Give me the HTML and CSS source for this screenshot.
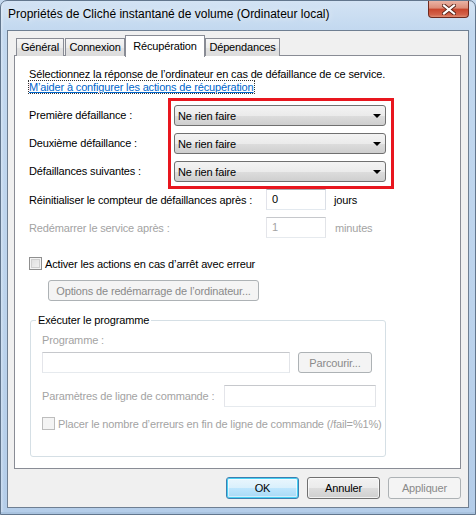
FILE: index.html
```html
<!DOCTYPE html>
<html lang="fr">
<head>
<meta charset="utf-8">
<title>Propriétés de Cliché instantané de volume</title>
<link rel="stylesheet" href="styles.css">
</head>
<body>
<div class="window">
  <div class="titlebar">
    <div class="title">Propriétés de Cliché instantané de volume (Ordinateur local)</div>
    <div class="close">
      <svg width="14" height="11" viewBox="0 0 14 11">
        <path d="M2 1.5 L12 9.5 M12 1.5 L2 9.5" stroke="#5a2418" stroke-width="4" stroke-linecap="square" fill="none"/>
        <path d="M2 1.5 L12 9.5 M12 1.5 L2 9.5" stroke="#ffffff" stroke-width="2.2" stroke-linecap="square" fill="none"/>
      </svg>
    </div>
  </div>
  <div class="client">
    <div class="tabs">
      <div class="tab tab-general">Général</div>
      <div class="tab tab-connexion">Connexion</div>
      <div class="tab tab-selected">Récupération</div>
      <div class="tab tab-dep">Dépendances</div>
    </div>
    <div class="panel">
      <p class="intro">Sélectionnez la réponse de l’ordinateur en cas de défaillance de ce service.</p>
      <p class="intro"><a class="link" href="#">M’aider à configurer les actions de récupération</a></p>

      <div class="failures">
        <div class="fail-labels">
          <div class="fail-label">Première défaillance :</div>
          <div class="fail-label">Deuxième défaillance :</div>
          <div class="fail-label">Défaillances suivantes :</div>
        </div>
        <div class="highlight">
          <div class="combo"><span>Ne rien faire</span><span class="arrow"></span></div>
          <div class="combo"><span>Ne rien faire</span><span class="arrow"></span></div>
          <div class="combo"><span>Ne rien faire</span><span class="arrow"></span></div>
        </div>
      </div>

      <div class="field-row">
        <div class="field-label">Réinitialiser le compteur de défaillances après :</div>
        <div class="textbox small">0</div>
        <div class="unit">jours</div>
      </div>
      <div class="field-row row-restart disabled">
        <div class="field-label">Redémarrer le service après :</div>
        <div class="textbox small off">1</div>
        <div class="unit unit-min">minutes</div>
      </div>

      <div class="check-row">
        <span class="checkbox"></span>
        <span>Activer les actions en cas d’arrêt avec erreur</span>
      </div>

      <div class="btn btn-off btn-options">Options de redémarrage de l’ordinateur...</div>

      <fieldset class="group">
        <legend>Exécuter le programme</legend>
        <div class="disabled prog-label">Programme :</div>
        <div class="prog-row">
          <div class="textbox off prog-input"></div>
          <div class="btn btn-off btn-browse">Parcourir...</div>
        </div>
        <div class="params-row disabled">
          <div class="params-label">Paramètres de ligne de commande :</div>
          <div class="textbox off params-input"></div>
        </div>
        <div class="check-row check-fail disabled">
          <span class="checkbox off"></span>
          <span>Placer le nombre d’erreurs en fin de ligne de commande (/fail=%1%)</span>
        </div>
      </fieldset>
    </div>
    <div class="buttons">
      <div class="btn btn-default">OK</div>
      <div class="btn">Annuler</div>
      <div class="btn btn-off">Appliquer</div>
    </div>
  </div>
</div>
</body>
</html>
```

FILE: styles.css
```css
html, body {
  margin: 0;
  padding: 0;
}
body {
  width: 476px;
  height: 515px;
  overflow: hidden;
  font-family: "Liberation Sans", Arial, sans-serif;
  font-size: 11px;
  letter-spacing: -0.15px;
  color: #000;
  background: #c3d8ee;
}
.window {
  box-sizing: border-box;
  width: 476px;
  height: 515px;
  border: 1px solid #62768d;
  border-radius: 7px 7px 0 0;
  padding: 0 6px 6px 6px;
  display: flex;
  flex-direction: column;
  background:
    linear-gradient(90deg, rgba(255,255,255,0.35) 0, rgba(255,255,255,0) 3px),
    linear-gradient(180deg, #d3e3f4 0, #c2d8ef 30px, #bcd3ec 60%, #b4cde9 100%);
  box-shadow: inset 0 -2px 0 #a9c3df;
}
.titlebar {
  height: 29px;
  flex: none;
  display: flex;
  justify-content: space-between;
  align-items: flex-start;
}
.title {
  padding-left: 1px;
  line-height: 26px;
  font-size: 12px;
  letter-spacing: 0;
  color: #000;
  text-shadow: 0 0 6px rgba(255,255,255,0.9);
}
.close {
  width: 41px;
  height: 17px;
  box-sizing: border-box;
  border: 1px solid #6e2a1f;
  border-top: none;
  border-radius: 0 0 4px 4px;
  background: linear-gradient(180deg, #eab3a4 0, #dc8c78 45%, #c8452c 50%, #d3624a 85%, #e08c72 100%);
  display: flex;
  align-items: center;
  justify-content: center;
}
.client {
  flex: 1;
  border: 1px solid #6f7f92;
  background: #f0f0f0;
  padding: 4px 7px 0 6px;
  display: flex;
  flex-direction: column;
}
.tabs {
  height: 21px;
  flex: none;
  display: flex;
  align-items: flex-end;
  margin-bottom: -1px;
  position: relative;
  z-index: 1;
}
.tab {
  box-sizing: border-box;
  height: 18px;
  border: 1px solid #898c95;
  border-bottom: none;
  background: linear-gradient(180deg, #f6f6f6 0, #ececec 50%, #e2e2e2 51%, #dcdcdc 100%);
  text-align: center;
  line-height: 17px;
  white-space: nowrap;
}
.tab-general { width: 48px; margin-left: 2px; }
.tab-connexion { width: 60px; margin-left: 1px; }
.tab-selected {
  width: 80px;
  height: 22px;
  line-height: 20px;
  background: #fff;
  margin-bottom: -1px;
}
.tab-dep { width: 75px; }
.panel {
  flex: none;
  box-sizing: border-box;
  width: 447px;
  height: 414px;
  border: 1px solid #898c95;
  background: #fff;
  padding: 12px 0 0 14px;
}
.intro {
  margin: 0;
  line-height: 13px;
  white-space: nowrap;
}
.link {
  color: #0066cc;
  text-decoration: underline;
  outline: 1px dotted #333;
  outline-offset: 0;
}
.failures {
  display: flex;
  margin-top: 4px;
}
.fail-labels {
  width: 139px;
  padding-top: 7px;
  display: flex;
  flex-direction: column;
  gap: 7px;
}
.fail-label {
  height: 21px;
  line-height: 21px;
}
.highlight {
  border: 3px solid #e8161e;
  padding: 4px 5px 4px 3px;
  display: flex;
  flex-direction: column;
  gap: 7px;
}
.combo {
  box-sizing: border-box;
  width: 212px;
  height: 21px;
  border: 1px solid #707070;
  border-radius: 3px;
  background: linear-gradient(180deg, #f3f3f3 0, #ebebeb 50%, #dddddd 51%, #cfcfcf 100%);
  display: flex;
  align-items: center;
  justify-content: space-between;
  padding: 0 4px 0 3px;
}
.arrow {
  width: 0;
  height: 0;
  border-left: 4px solid transparent;
  border-right: 4px solid transparent;
  border-top: 4px solid #000;
}
.field-row {
  display: flex;
  align-items: center;
  height: 21px;
}
.row-restart { margin-top: 7px; }
.field-label { width: 237px; white-space: nowrap; }
.textbox {
  box-sizing: border-box;
  height: 21px;
  border: 1px solid;
  border-color: #abadb3 #dbdfe6 #e3e9ef #e2e3ea;
  background: #fff;
  padding: 0 0 0 5px;
  line-height: 19px;
}
.textbox.off {
  border-color: #c6c8cc #e2e4e8 #e6eaee #e4e5ea;
  color: #a3a3a3;
}
.small { width: 60px; }
.unit { margin-left: 8px; }
.unit-min { margin-left: 9px; }
.disabled { color: #a3a3a3; }
.check-row {
  display: flex;
  align-items: center;
  height: 13px;
  margin-top: 19px;
  gap: 3px;
  white-space: nowrap;
}
.checkbox {
  box-sizing: border-box;
  width: 13px;
  height: 13px;
  flex: none;
  border: 1px solid #8f8f8f;
  background: linear-gradient(135deg, #dcdcdc 0, #f4f4f4 100%);
  box-shadow: inset 0 0 0 1px #f4f4f4, inset 0 0 0 2px #cfcfcf;
}
.checkbox.off {
  border-color: #bdbdbd;
  background: #f4f4f4;
  box-shadow: inset 0 0 0 2px #f4f4f4;
}
.btn {
  box-sizing: border-box;
  width: 73px;
  height: 22px;
  border: 1px solid #707070;
  border-radius: 3px;
  background: linear-gradient(180deg, #f2f2f2 0, #ebebeb 50%, #dddddd 51%, #cfcfcf 100%);
  display: flex;
  align-items: center;
  justify-content: center;
  white-space: nowrap;
  box-shadow: inset 0 0 0 1px rgba(255,255,255,0.7);
}
.btn-off {
  border-color: #adb2b5;
  background: #f4f4f4;
  color: #8a8a8a;
  box-shadow: none;
}
.btn-default {
  border-color: #3c7fb1;
  background: linear-gradient(180deg, #eaf6fd 0, #d9f0fc 50%, #bee6fd 51%, #a7d9f5 100%);
  box-shadow: inset 0 0 0 1px #48d0f3, inset 0 0 0 2px rgba(255,255,255,0.5);
}
.btn-options {
  width: 211px;
  height: 21px;
  margin: 10px 0 0 19px;
}
.group {
  box-sizing: border-box;
  width: 356px;
  height: 143px;
  margin: 13px 0 0 1px;
  border: 1px solid #d5dfe5;
  border-radius: 3px;
  padding: 0 0 0 11px;
  min-width: 0;
}
.group legend {
  padding: 0 2px;
  margin-left: -6px;
  line-height: 13px;
}
.prog-label {
  margin-top: 7px;
  line-height: 13px;
}
.prog-row {
  display: flex;
  align-items: center;
  margin-top: 5px;
  gap: 8px;
}
.prog-input { width: 248px; }
.btn-browse { width: 74px; height: 21px; }
.params-row {
  display: flex;
  align-items: center;
  margin-top: 12px;
}
.params-label { width: 182px; white-space: nowrap; }
.params-input { width: 152px; height: 22px; }
.check-fail { margin-top: 10px; }
.buttons {
  display: flex;
  justify-content: flex-end;
  gap: 8px;
  margin-top: 8px;
}
```
